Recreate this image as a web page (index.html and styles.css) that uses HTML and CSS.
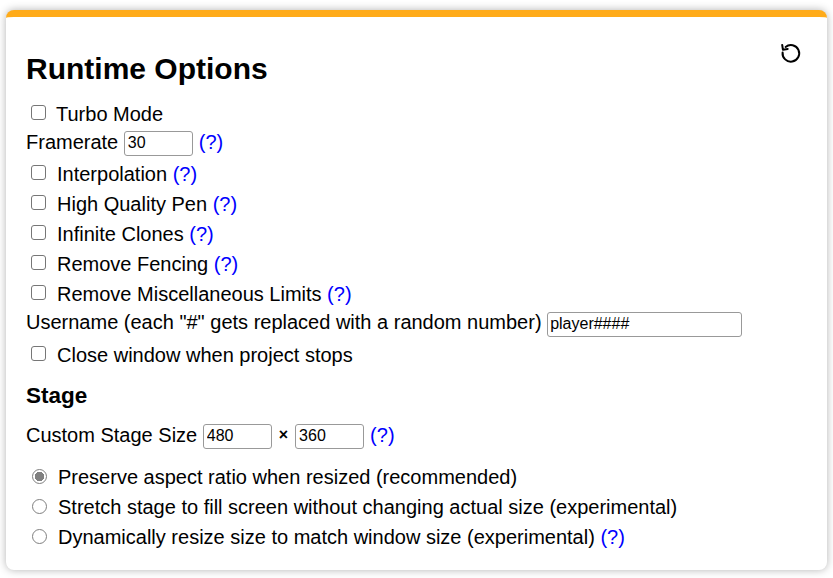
FILE: index.html
```html
<!DOCTYPE html>
<html lang="en">
<head>
<meta charset="utf-8">
<title>Runtime Options</title>
<link rel="stylesheet" href="styles.css">
</head>
<body>
<main class="card">
  <button class="reset" type="button" aria-label="Reset">
    <svg viewBox="0 0 24 24" width="24" height="24" class="reset-icon"><path d="M4.6 11.5a8.3 8.3 0 1 0 3-5.6" fill="none" stroke="#000" stroke-width="2" stroke-linecap="round"/><path d="M4.2 3.9l.7 4.8 4.8-.7" fill="none" stroke="#000" stroke-width="2" stroke-linecap="round" stroke-linejoin="round"/></svg>
  </button>
  <h1 class="title">Runtime Options</h1>
  <div class="opts">
    <label class="row check-row first"><input class="check check-turbo" type="checkbox"><span>Turbo Mode</span></label>
    <div class="row field-row">Framerate <input class="num" type="text" value="30"> <a class="help">(?)</a></div>
    <label class="row check-row"><input class="check" type="checkbox"><span>Interpolation <a class="help">(?)</a></span></label>
    <label class="row check-row"><input class="check" type="checkbox"><span>High Quality Pen <a class="help">(?)</a></span></label>
    <label class="row check-row"><input class="check" type="checkbox"><span>Infinite Clones <a class="help">(?)</a></span></label>
    <label class="row check-row"><input class="check" type="checkbox"><span>Remove Fencing <a class="help">(?)</a></span></label>
    <label class="row check-row"><input class="check" type="checkbox"><span>Remove Miscellaneous Limits <a class="help">(?)</a></span></label>
    <div class="row user-row">Username (each "#" gets replaced with a random number) <input class="user" type="text" value="player####"></div>
    <label class="row check-row close-row"><input class="check" type="checkbox"><span>Close window when project stops</span></label>
  </div>
  <h2 class="subtitle">Stage</h2>
  <div class="row size-row">Custom Stage Size <input class="num" type="text" value="480"> <b class="times">×</b> <input class="num" type="text" value="360"> <a class="help">(?)</a></div>
  <div class="radios">
    <label class="row radio-row"><input class="radio" type="radio" name="fit" checked><span>Preserve aspect ratio when resized (recommended)</span></label>
    <label class="row radio-row"><input class="radio" type="radio" name="fit"><span>Stretch stage to fill screen without changing actual size (experimental)</span></label>
    <label class="row radio-row"><input class="radio" type="radio" name="fit"><span>Dynamically resize size to match window size (experimental) <a class="help">(?)</a></span></label>
  </div>
</main>
</body>
</html>
```
FILE: styles.css
```css
* { box-sizing: border-box; }
html, body { height: 100%; }
body {
  margin: 0;
  padding: 10px 6px 8px;
  background: #fff;
  font-family: "Liberation Sans", Arial, sans-serif;
  font-size: 20px;
  color: #000;
}
.card {
  position: relative;
  height: 560px;
  padding: 30px 20px 0;
  background: #fff;
  border-top: 7px solid #ffab19;
  border-radius: 8px;
  box-shadow: 0 0 8px rgba(0, 0, 0, 0.3);
}
.reset {
  position: absolute;
  top: 24px;
  right: 25px;
  padding: 0;
  border: 0;
  background: none;
  line-height: 0;
}
.title {
  margin: 0 0 12px;
  font-size: 30px;
  line-height: 44px;
  font-weight: bold;
}
.row { display: flex; align-items: center; white-space: pre-wrap; }
.check-row { height: 30px; }
.first { height: 22px; }
.field-row { height: 34px; }
.user-row { height: 26px; }
.close-row { height: 40px; }
.check {
  appearance: none;
  width: 15px;
  height: 15px;
  margin: 0 11px 4px 5px;
  flex: none;
  border: 1.25px solid #767676;
  border-radius: 3px;
  background: #fff;
}
.check-turbo { margin-right: 10px; }
.num, .user {
  margin: 2px 6px 0 0;
  height: 25px;
  padding: 1px 3px;
  border: 1px solid #999;
  border-radius: 3px;
  background: #fff;
  font: 16px "Liberation Sans", Arial, sans-serif;
  color: #000;
}
.num { width: 69px; }
.user { width: 195px; margin: 4px 0 0; padding-left: 2px; }
.help { color: #0000ff; }
.subtitle {
  margin: 6px 0 8px;
  font-size: 22.5px;
  line-height: 30px;
  font-weight: bold;
}
.size-row { height: 32px; }
.times { font-size: 16px; margin: 0 7px 0 1px; }
.radios { margin-top: 11px; }
.radio-row { height: 30px; }
.radio {
  appearance: none;
  width: 15px;
  height: 15px;
  margin: 0 11px 2px 6px;
  flex: none;
  border: 1.5px solid #7f7f7f;
  border-radius: 50%;
  background: #fff;
}
.radio:checked { background: radial-gradient(circle, #808080 0 4.5px, #fff 5px); }
```
